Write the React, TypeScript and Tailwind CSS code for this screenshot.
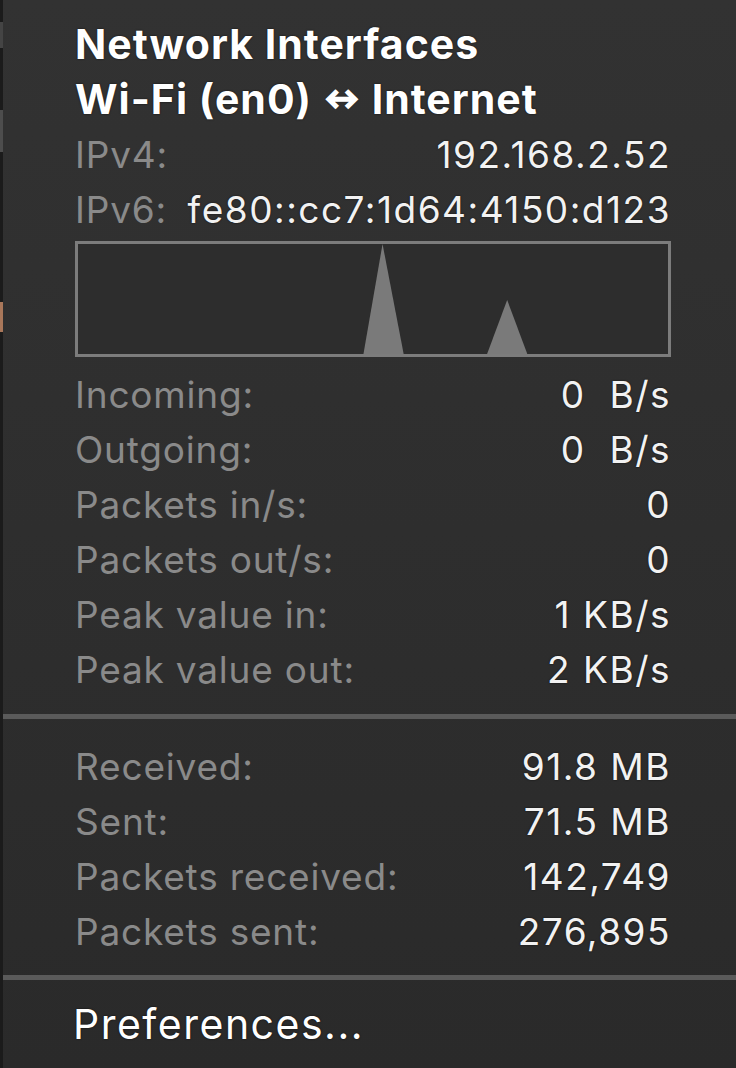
import React from 'react'

// Network interface menu — dark macOS-style dropdown panel

type Row = { label: string; value: string }

const ipRows: Row[] = [
  { label: 'IPv4:', value: '192.168.2.52' },
  { label: 'IPv6:', value: 'fe80::cc7:1d64:4150:d123' },
]

const rateRows: Row[] = [
  { label: 'Incoming:', value: '0  B/s' },
  { label: 'Outgoing:', value: '0  B/s' },
  { label: 'Packets in/s:', value: '0' },
  { label: 'Packets out/s:', value: '0' },
  { label: 'Peak value in:', value: '1 KB/s' },
  { label: 'Peak value out:', value: '2 KB/s' },
]

const totalRows: Row[] = [
  { label: 'Received:', value: '91.8 MB' },
  { label: 'Sent:', value: '71.5 MB' },
  { label: 'Packets received:', value: '142,749' },
  { label: 'Packets sent:', value: '276,895' },
]

function StatRow({ label, value }: Row) {
  return (
    <div className="flex h-[55px] items-center justify-between whitespace-pre">
      <span className="tracking-[0.8px] text-[#8a8a8a]">{label}</span>
      <span className="tracking-[1.5px] text-[#f2f2f2] [text-shadow:0_0_2px_rgba(0,0,0,0.7)]">{value}</span>
    </div>
  )
}

function Graph() {
  return (
    <div className="mt-[4px] h-[116px] border-[3px] border-[#7c7c7c] bg-[#2d2d2d]">
      <svg viewBox="0 0 587 110" preserveAspectRatio="none" className="block h-full w-full">
        <polygon points="284,110 303,0 324,110" fill="#7a7a7a" />
        <polygon points="407,110 427,56 447,110" fill="#7a7a7a" />
      </svg>
    </div>
  )
}

function Divider() {
  return <div className="h-[5px] bg-[#5a5a5a]" />
}

export default function App() {
  return (
    <div
      className="flex h-[1068px] w-[736px] overflow-hidden bg-gradient-to-b from-[#323232] to-[#2a2a2a] text-[37px]"
      style={{ fontFamily: 'Inter, "DejaVu Sans", sans-serif' }}
    >
      {/* desktop edge peeking behind the menu */}
      <div className="flex w-[3px] shrink-0 flex-col bg-[#1b1b1b]">
        <div className="mt-[22px] h-[26px] bg-[#444444]" />
        <div className="mt-[62px] h-[42px] bg-[#4d4d4d]" />
        <div className="mt-[150px] h-[30px] bg-[#a9775a]" />
      </div>

      <div className="flex min-w-0 flex-1 flex-col">
        <div className="pl-[72px] pr-[65px] pt-[17px]">
          <div className="flex h-[55px] items-center text-[41px] font-bold tracking-[1px] text-white [text-shadow:0_0_2px_rgba(0,0,0,0.8)]">
            Network Interfaces
          </div>
          <div className="flex h-[55px] items-center whitespace-pre text-[41px] font-bold tracking-[1px] text-white [text-shadow:0_0_2px_rgba(0,0,0,0.8)]">
            Wi-Fi (en0) <span className="mx-[1px] text-[27px] font-extrabold tracking-normal [-webkit-text-stroke:1.5px_white]">↔</span> Internet
          </div>
          {ipRows.map((r) => (
            <StatRow key={r.label} {...r} />
          ))}
          <Graph />
          <div className="mt-[10px]">
            {rateRows.map((r) => (
              <StatRow key={r.label} {...r} />
            ))}
          </div>
        </div>

        <div className="mt-[17px]">
          <Divider />
        </div>

        <div className="mt-[20px] pl-[72px] pr-[65px]">
          {totalRows.map((r) => (
            <StatRow key={r.label} {...r} />
          ))}
        </div>

        <div className="mt-[16px]">
          <Divider />
        </div>

        <div className="mt-[17px] flex h-[55px] items-center pl-[70px] text-[41px] tracking-[1.5px] text-white [text-shadow:0_0_2px_rgba(0,0,0,0.8)]">
          Preferences...
        </div>
      </div>
    </div>
  )
}
